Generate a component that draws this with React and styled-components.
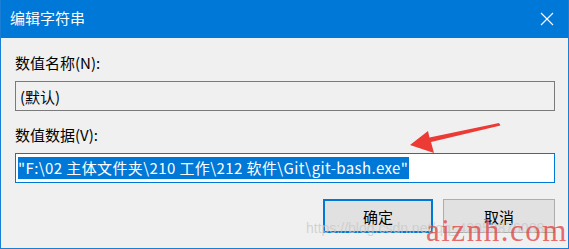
import React from "react";
import styled, { createGlobalStyle } from "styled-components";

const Global = createGlobalStyle`
  html, body { margin: 0; padding: 0; background: #f0f0f0; }
  body { width: 569px; height: 249px; overflow: hidden; }
`;

const Window = styled.div`
  position: relative;
  box-sizing: border-box;
  width: 569px;
  height: 249px;
  background: #f0f0f0;
  border: 1px solid #1a7fd4;
  border-top: none;
  font-family: "Noto Sans CJK SC", "Noto Sans", sans-serif;
  color: #000;
  display: flex;
  flex-direction: column;
  overflow: hidden;
`;

const TitleBar = styled.div`
  height: 38px;
  margin: 0 -1px;
  background: #0078d7;
  display: flex;
  align-items: center;
  justify-content: space-between;
  padding: 0 15px 0 10px;
  color: #fff;
  font-size: 15px;
  flex-shrink: 0;
`;

const TitleText = styled.span`
  line-height: 20px;
  margin-top: -2px;
`;

const Body = styled.div`
  display: flex;
  flex-direction: column;
  padding: 0 13px 0 14px;
`;

const Label = styled.div`
  height: 20px;
  line-height: 20px;
  font-size: 15px;
  margin-top: ${(p) => p.$top}px;
`;

const Field = styled.div`
  box-sizing: border-box;
  height: 30px;
  margin-top: 8px;
  border: 1px solid ${(p) => (p.$active ? "#0078d7" : "#7a7a7a")};
  background: ${(p) => (p.$active ? "#ffffff" : "#f0f0f0")};
  display: flex;
  align-items: center;
  padding-left: ${(p) => (p.$active ? 2 : 4)}px;
  font-size: 15px;
`;

const Selection = styled.span`
  background: #0078d7;
  color: #fff;
  height: 22px;
  line-height: 22px;
  letter-spacing: 0.4px;
  padding-right: 1px;
  white-space: pre;
`;

const ButtonRow = styled.div`
  display: flex;
  justify-content: flex-end;
  gap: 10px;
  margin-top: 16px;
`;

const Button = styled.div`
  box-sizing: border-box;
  width: ${(p) => (p.$primary ? 110 : 112)}px;
  height: 34px;
  background: #e1e1e1;
  border: ${(p) => (p.$primary ? "2px solid #0078d7" : "1px solid #adadad")};
  display: flex;
  align-items: center;
  justify-content: center;
  font-size: 15px;
`;

const Arrow = styled.svg`
  position: absolute;
  left: 400px;
  top: 115px;
`;

const FaintMark = styled.div`
  position: absolute;
  left: 305px;
  top: 220px;
  font-family: "Liberation Sans", sans-serif;
  font-size: 14px;
  color: rgba(200, 200, 200, 0.75);
  white-space: nowrap;
`;

const RedMark = styled.div`
  position: absolute;
  left: 425px;
  top: 215px;
  font-family: "Liberation Serif", serif;
  font-size: 31px;
  line-height: 31px;
  letter-spacing: 1.5px;
  color: rgba(226, 70, 70, 0.8);
  white-space: nowrap;
`;

export default function App() {
  return (
    <>
      <Global />
      <Window>
        <TitleBar>
          <TitleText>编辑字符串</TitleText>
          <svg width="14" height="14" viewBox="0 0 14 14">
            <path d="M1 1 L13 13 M13 1 L1 13" stroke="#fff" strokeWidth="1.1" fill="none" />
          </svg>
        </TitleBar>
        <Body>
          <Label $top={15}>数值名称(N):</Label>
          <Field>(默认)</Field>
          <Label $top={14}>数值数据(V):</Label>
          <Field $active>
            <Selection>"F:\02 主体文件夹\210 工作\212 软件\Git\git-bash.exe"</Selection>
          </Field>
          <ButtonRow>
            <Button $primary>确定</Button>
            <Button>取消</Button>
          </ButtonRow>
        </Body>
        <Arrow width="110" height="45" viewBox="0 0 110 45">
          <path d="M98 8 L99.5 10.5 L30 27 L33 38 L9 30 L27 16 L28.5 22.5 Z" fill="#ec3a35" />
        </Arrow>
        <FaintMark>https://blog.csdn.net/qq_42059876088</FaintMark>
        <RedMark>aiznh.com</RedMark>
      </Window>
    </>
  );
}
